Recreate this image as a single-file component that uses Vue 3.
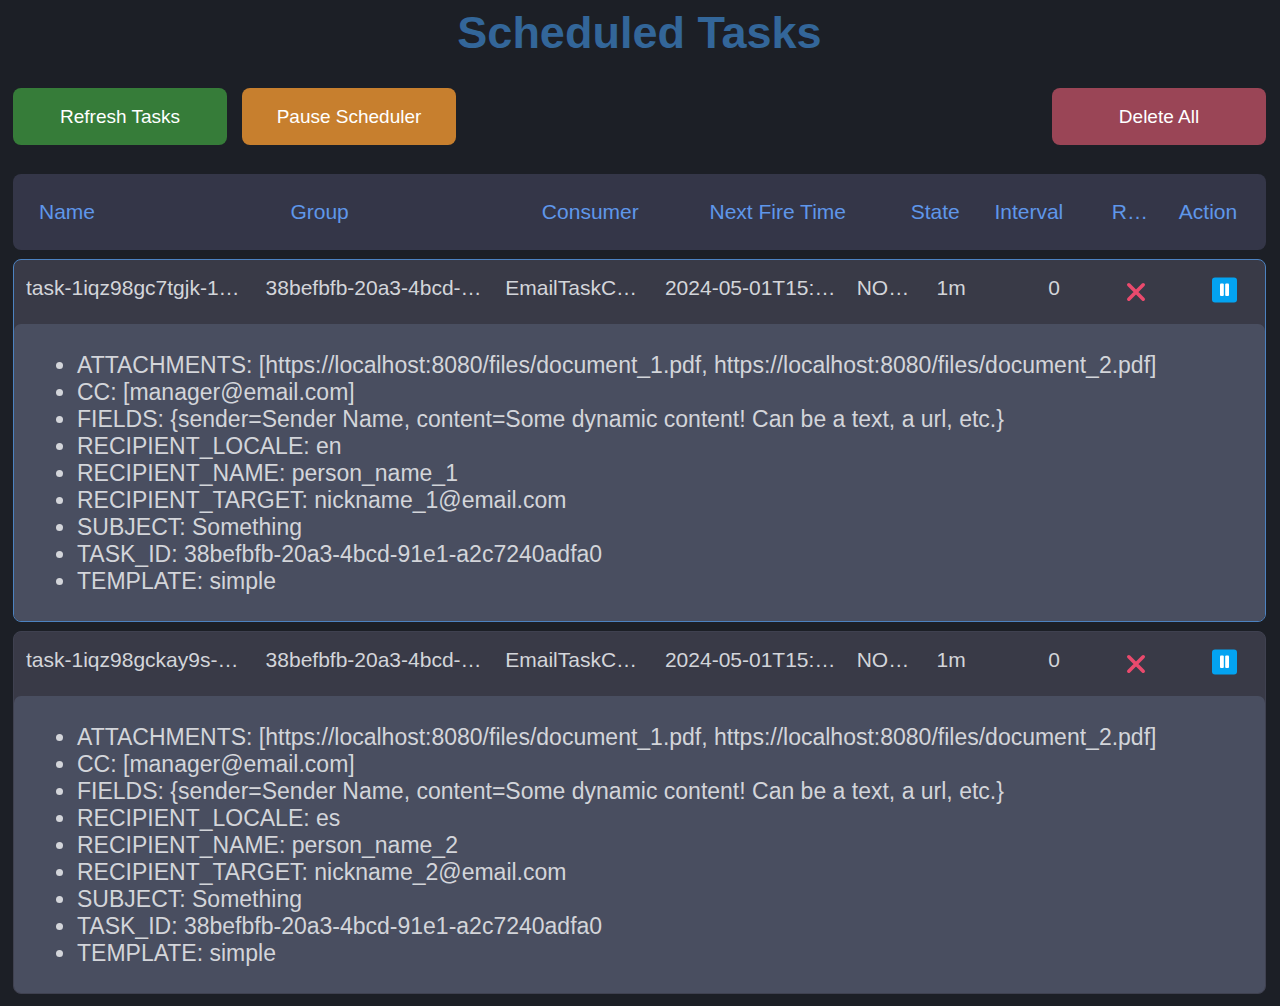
<script setup>
import { ref } from 'vue'

const columns = ['Name', 'Group', 'Consumer', 'Next Fire Time', 'State', 'Interval', 'Repeat', 'Action']

const makeTask = (n, name, locale) => ({
  name,
  group: '38befbfb-20a3-4bcd-91e1-a2c7240adfa0',
  consumer: 'EmailTaskConsumer',
  nextFireTime: '2024-05-01T15:30:00Z',
  state: 'NORMAL',
  interval: '1m',
  repeat: 0,
  details: {
    ATTACHMENTS: '[https://localhost:8080/files/document_1.pdf, https://localhost:8080/files/document_2.pdf]',
    CC: '[manager@email.com]',
    FIELDS: '{sender=Sender Name, content=Some dynamic content! Can be a text, a url, etc.}',
    RECIPIENT_LOCALE: locale,
    RECIPIENT_NAME: `person_name_${n}`,
    RECIPIENT_TARGET: `nickname_${n}@email.com`,
    SUBJECT: 'Something',
    TASK_ID: '38befbfb-20a3-4bcd-91e1-a2c7240adfa0',
    TEMPLATE: 'simple',
  },
})

const tasks = ref([
  makeTask(1, 'task-1iqz98gc7tgjk-1714575600', 'en'),
  makeTask(2, 'task-1iqz98gckay9s-1714575600', 'es'),
])
const selected = ref(0)
</script>

<template>
  <main class="page">
    <h1>Scheduled Tasks</h1>

    <div class="toolbar">
      <button type="button" class="btn refresh">Refresh Tasks</button>
      <button type="button" class="btn pause">Pause Scheduler</button>
      <button type="button" class="btn delete">Delete All</button>
    </div>

    <table class="tasks">
      <thead>
        <tr class="head">
          <th v-for="c in columns" :key="c" scope="col">{{ c }}</th>
        </tr>
      </thead>
      <tbody
        v-for="(t, i) in tasks"
        :key="t.name"
        class="card"
        :class="{ selected: selected === i }"
        @click="selected = i"
      >
        <tr class="row">
          <td>{{ t.name }}</td>
          <td>{{ t.group }}</td>
          <td>{{ t.consumer }}</td>
          <td>{{ t.nextFireTime }}</td>
          <td>{{ t.state }}</td>
          <td>{{ t.interval }}</td>
          <td>{{ t.repeat }}</td>
          <td class="icon-cell">
            <button type="button" class="icon" aria-label="Delete task">
              <svg width="24" height="28" viewBox="0 0 24 28">
                <path d="M4.8 8.8 19.2 23.2M19.2 8.8 4.8 23.2" stroke="#ea4a6d" stroke-width="3.6" stroke-linecap="round" />
              </svg>
            </button>
          </td>
          <td class="icon-cell">
            <button type="button" class="icon" aria-label="Pause task">
              <svg width="25" height="28" viewBox="0 0 25 28">
                <rect x="0" y="1.5" width="25" height="25" rx="3" fill="#03a3f1" />
                <rect x="8" y="7.5" width="3.8" height="12.5" rx="1" fill="#fff" />
                <rect x="13.2" y="7.5" width="3.8" height="12.5" rx="1" fill="#fff" />
              </svg>
            </button>
          </td>
        </tr>
        <tr class="details">
          <td colspan="9">
            <ul>
              <li v-for="(value, key) in t.details" :key="key">{{ key }}: {{ value }}</li>
            </ul>
          </td>
        </tr>
      </tbody>
    </table>
  </main>
</template>

<style>
body {
  margin: 0;
  background: #1c1f26;
}
</style>

<style scoped>
.page {
  padding: 7px 14px 13px 13px;
  font-family: "Liberation Sans", Arial, sans-serif;
  color: #d3d5da;
}

h1 {
  margin: 0 0 29px;
  font-size: 45px;
  line-height: 52px;
  text-align: center;
  color: #336699;
}

.toolbar {
  display: flex;
  gap: 15px;
  margin-bottom: 29px;
}

.btn {
  width: 214px;
  height: 57px;
  padding: 0;
  border: 0;
  border-radius: 8px;
  font: inherit;
  font-size: 19px;
  color: #fff;
  cursor: pointer;
}

.refresh {
  background: #367c39;
}

.pause {
  background: #c77f2e;
}

.delete {
  margin-left: auto;
  background: #9a4556;
}

.tasks {
  display: flex;
  flex-direction: column;
  gap: 9px;
}

thead,
.card,
.details,
.details td {
  display: block;
}

.head,
.row {
  display: grid;
  font-size: 21px;
  line-height: 24px;
}

.head {
  grid-template-columns: 3fr 3fr 2fr 2.4fr 1fr 1.4fr 0.8fr 0.73fr;
  padding: 26px 26px;
  border-radius: 8px;
  background: #343648;
  color: #5f97ea;
}

.row {
  grid-template-columns: 3fr 3fr 2fr 2.4fr 1fr 1.4fr 0.95fr 1.1fr 0.35fr;
  height: 64px;
  padding: 16px 25px 0 12px;
  box-sizing: border-box;
}

th,
.row td {
  min-width: 0;
  padding: 0 20px 0 0;
  overflow: hidden;
  font-weight: 400;
  text-align: left;
  text-overflow: ellipsis;
  white-space: nowrap;
}

th:last-child,
.row .icon-cell {
  padding-right: 0;
  overflow: visible;
}

.icon {
  display: block;
  padding: 0;
  border: 0;
  background: none;
  cursor: pointer;
}

.icon svg {
  display: block;
  fill: none;
}

.card {
  border: 1px solid #3f4150;
  border-radius: 8px;
  background: #393a47;
}

.card.selected {
  border-color: #4c82c0;
}

.details {
  border-radius: 7px;
  background: #494e60;
}

.details td {
  padding: 28px 24px 26px 63px;
}

ul {
  margin: 0;
  padding: 0;
  font-size: 23px;
  line-height: 27px;
}
</style>
